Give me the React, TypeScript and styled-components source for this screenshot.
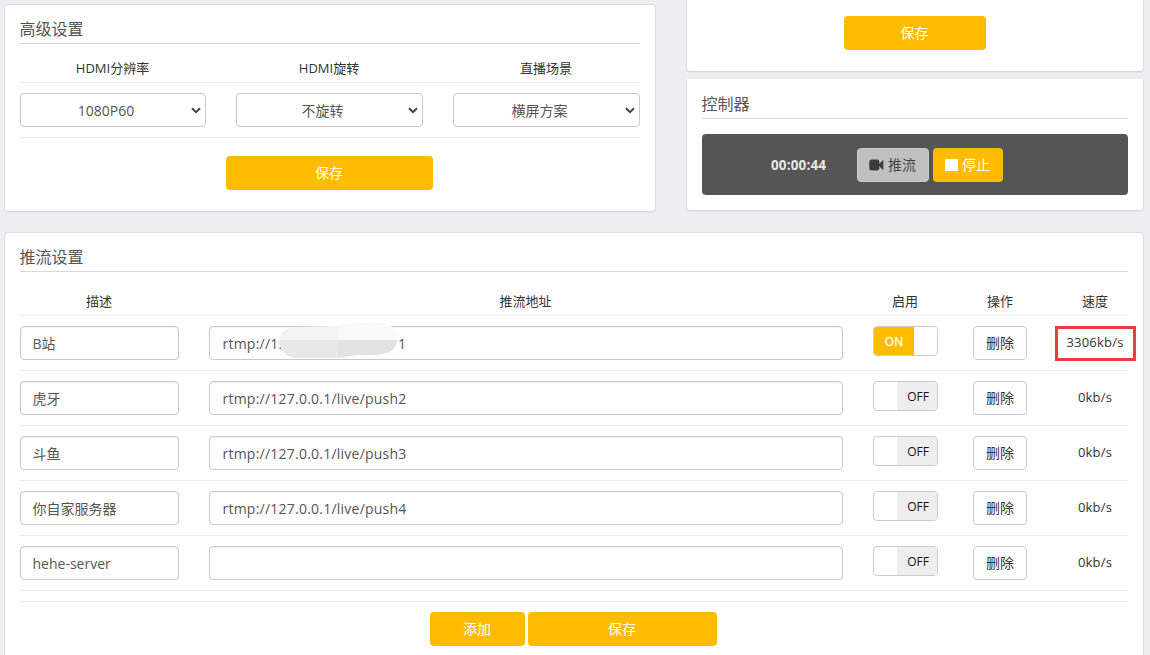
import React from "react";
import styled, { createGlobalStyle } from "styled-components";

const Global = createGlobalStyle`
  * { box-sizing: border-box; }
  html, body { margin: 0; height: 655px; overflow: hidden; background: #eeeef2; }
  body { font-family: "Open Sans", "Noto Sans CJK SC", sans-serif; font-size: 14px; color: #333; font-weight: 400; }
`;

const Page = styled.main`
  height: 655px;
  overflow: hidden;
  padding: 0 6px 0 4px;
  display: flex;
  flex-direction: column;
  gap: 20px;
`;

const Top = styled.div`
  display: grid;
  grid-template-columns: 652px 458px;
  justify-content: space-between;
  height: 212px;
  flex: none;
`;

const Column = styled.div`
  display: flex;
  flex-direction: column;
  gap: 7px;
`;

const Card = styled.section<{ $h: number; $mt?: number; $open?: boolean }>`
  height: ${(p) => p.$h}px;
  margin-top: ${(p) => p.$mt ?? 0}px;
  flex: none;
  padding: 0 15px;
  background: #fff;
  border: 1px solid #dcdcde;
  border-top-color: ${(p) => (p.$open ? "#fff" : "#dcdcde")};
  border-bottom-color: #d6d6d9;
  border-radius: ${(p) => (p.$open ? "0 0 4px 4px" : "4px")};
  box-shadow: 0 1px 1px rgba(0, 0, 0, 0.04);
`;

const Title = styled.h2`
  margin: 0;
  height: 39px;
  padding-top: 12px;
  border-bottom: 1px solid #d9d9d9;
  font-size: 16px;
  line-height: 24px;
  font-weight: 400;
  color: #555;
  text-indent: -0.5px;
`;

const ThirdsRow = styled.div<{ $h: number }>`
  height: ${(p) => p.$h}px;
  display: grid;
  grid-template-columns: 186px 187px 187px;
  justify-content: space-between;
  border-bottom: 1px solid #ebebeb;
`;

const StreamRow = styled.div<{ $h?: number }>`
  height: ${(p) => p.$h ?? 55}px;
  display: grid;
  grid-template-columns: 159px 634px 65px 65px 65px;
  column-gap: 30px;
  border-bottom: 1px solid #ebebeb;
`;

const Head = styled.div<{ $pt: number }>`
  padding-top: ${(p) => p.$pt}px;
  padding-right: 1px;
  font-size: 13px;
  line-height: 20px;
  text-align: center;
  color: #333;
`;

const Field = styled.div`
  position: relative;
  height: 34px;
  margin-top: 10px;
  padding: 1px 12px 0 11.5px;
  border: 1px solid #c8c8cc;
  border-radius: 4px;
  box-shadow: inset 0 1px 1px rgba(0, 0, 0, 0.06);
  line-height: 32px;
  white-space: pre;
  color: #555;
`;

const UrlField = styled(Field)`
  padding-left: 12.5px;
  letter-spacing: 0.23px;
`;

const SelectBox = styled(Field)`
  padding: 1px 26px 0 12px;
  text-align: center;
  box-shadow: none;
  svg { position: absolute; right: 3px; top: 12px; }
`;

const Button = styled.button<{ $w: number }>`
  width: ${(p) => p.$w}px;
  height: 34px;
  padding: 0 1px 0 0;
  border: 0;
  border-radius: 4px;
  background: #fb0;
  color: #fff;
  font: inherit;
  line-height: 34px;
  display: flex;
  align-items: center;
  justify-content: center;
  gap: 4px;
`;

const PushButton = styled(Button)`
  background: #c0c0c0;
  border: 1px solid #cacaca;
  color: #444;
`;

const DeleteButton = styled(Button)`
  margin: 10px 0 0 5px;
  background: #fff;
  border: 1px solid #ccc;
  color: #333;
  padding: 0;
`;

const Actions = styled.div<{ $pt: number }>`
  padding-top: ${(p) => p.$pt}px;
  display: flex;
  justify-content: center;
  gap: 3px;
`;

const SettingsActions = styled(Actions)`
  padding-right: 1px;
`;

const FormActions = styled(Actions)`
  margin-top: 10px;
  border-top: 1px solid #ebebeb;
  padding-right: 1px;
`;

const Control = styled.div`
  margin-top: 15px;
  height: 61px;
  padding-left: 69px;
  border-radius: 4px;
  background: #555;
  display: flex;
  align-items: center;
  gap: 4px;
`;

const Timer = styled.strong`
  width: 82px;
  font-size: 13.5px;
  letter-spacing: 0.15px;
  color: #e6e6e6;
`;

const Switch = styled.div<{ $on: boolean }>`
  width: 65px;
  height: 30px;
  margin-top: 10px;
  border: 1px solid #ccc;
  border-radius: 4px;
  overflow: hidden;
  display: flex;
  justify-content: ${(p) => (p.$on ? "flex-start" : "flex-end")};
  background: #fff;
`;

const SwitchLabel = styled.span<{ $on: boolean }>`
  width: 40px;
  padding-left: ${(p) => (p.$on ? 0 : 2)}px;
  text-align: center;
  line-height: 29px;
  font-size: 12px;
  background: ${(p) => (p.$on ? "#fb0" : "#eee")};
  color: ${(p) => (p.$on ? "#fff" : "#111")};
  -webkit-text-stroke: ${(p) => (p.$on ? "0.3px #fff" : "0")};
`;

const Speed = styled.div`
  position: relative;
  padding: 16px 1px 0 0;
  margin: 0 -4px;
  line-height: 20px;
  font-size: 13px;
  letter-spacing: 0.2px;
  text-align: center;
  color: #333;
`;

const Highlight = styled.span`
  position: absolute;
  left: -4px;
  top: 10px;
  width: 81px;
  height: 35px;
  border: 3px solid #e8403e;
`;

const Masked = styled.span`
  position: absolute;
  left: 188px;
`;

const SmudgeSvg = styled.svg`
  position: absolute;
  left: 68px;
  top: -6px;
`;

const Chevron = () => (
  <svg width="12" height="9" viewBox="0 0 12 9" fill="none" stroke="#444" strokeWidth="2">
    <path d="M2 2.2 6 6.2 10 2.2" />
  </svg>
);

const Camera = () => (
  <svg width="15" height="12" viewBox="0 0 15 12" fill="#3c3c3c">
    <rect x="0.3" y="0.6" width="10" height="10.8" rx="2.2" />
    <path d="M10 5 13.6 1.4Q14.4 1 14.4 1.9V10.1Q14.4 11 13.6 10.6L10 7Z" />
  </svg>
);

const Stop = () => (
  <svg width="13" height="12" viewBox="0 0 13 12">
    <rect width="13" height="12" rx="0.6" fill="#fff" />
  </svg>
);

const Smudge = () => (
  <SmudgeSvg width="120" height="39" viewBox="0 0 120 39">
    <defs>
      <clipPath id="smudge">
        <path d="M16 6Q2 8 1 20Q2 34 16 37H58Q70 36 78 34Q94 35 104 33Q116 32 119 21Q120 10 112 4Q100 0 84 2Q68 2 58 5Z" />
      </clipPath>
    </defs>
    <g clipPath="url(#smudge)">
      <rect width="60" height="20" fill="#f3f3f3" />
      <rect x="60" width="60" height="20" fill="#f9f9f9" />
      <rect y="19" width="60" height="20" fill="#e8e8e8" />
      <rect x="60" y="19" width="60" height="20" fill="#e2e2e2" />
    </g>
  </SmudgeSvg>
);

const settings = [
  { label: "HDMI分辨率", value: "1080P60" },
  { label: "HDMI旋转", value: "不旋转" },
  { label: "直播场景", value: "横屏方案" },
];

const streams = [
  { name: "B站", url: "rtmp://1", tail: "1", on: true, speed: "3306kb/s" },
  { name: "虎牙", url: "rtmp://127.0.0.1/live/push2", on: false, speed: "0kb/s" },
  { name: "斗鱼", url: "rtmp://127.0.0.1/live/push3", on: false, speed: "0kb/s" },
  { name: "你自家服务器", url: "rtmp://127.0.0.1/live/push4", on: false, speed: "0kb/s" },
  { name: "hehe-server", url: "", on: false, speed: "0kb/s" },
];

export default function App() {
  return (
    <Page>
      <Global />
      <Top>
        <Card $h={208} $mt={4}>
          <Title>高级设置</Title>
          <ThirdsRow $h={39}>
            {settings.map((s) => <Head key={s.label} $pt={14}>{s.label}</Head>)}
          </ThirdsRow>
          <ThirdsRow $h={55}>
            {settings.map((s) => (
              <SelectBox key={s.label}>{s.value}<Chevron /></SelectBox>
            ))}
          </ThirdsRow>
          <SettingsActions $pt={18}><Button $w={207}>保存</Button></SettingsActions>
        </Card>
        <Column>
          <Card $h={72} $open>
            <Actions $pt={15}><Button $w={142}>保存</Button></Actions>
          </Card>
          <Card $h={132} $open>
            <Title>控制器</Title>
            <Control>
              <Timer>00:00:44</Timer>
              <PushButton $w={72}><Camera />推流</PushButton>
              <Button $w={70}><Stop />停止</Button>
            </Control>
          </Card>
        </Column>
      </Top>
      <Card $h={440}>
        <Title>推流设置</Title>
        <StreamRow $h={44}>
          {["描述", "推流地址", "启用", "操作", "速度"].map((h) => <Head key={h} $pt={19}>{h}</Head>)}
        </StreamRow>
        {streams.map((s) => (
          <StreamRow key={s.name}>
            <Field>{s.name}</Field>
            <UrlField>
              {s.url}
              {s.tail && <>.<Masked>{s.tail}</Masked><Smudge /></>}
            </UrlField>
            <Switch $on={s.on}><SwitchLabel $on={s.on}>{s.on ? "ON" : "OFF"}</SwitchLabel></Switch>
            <DeleteButton $w={54}>删除</DeleteButton>
            <Speed>{s.speed}{s.on && <Highlight />}</Speed>
          </StreamRow>
        ))}
        <FormActions $pt={10}>
          <Button $w={95}>添加</Button>
          <Button $w={189}>保存</Button>
        </FormActions>
      </Card>
    </Page>
  );
}
